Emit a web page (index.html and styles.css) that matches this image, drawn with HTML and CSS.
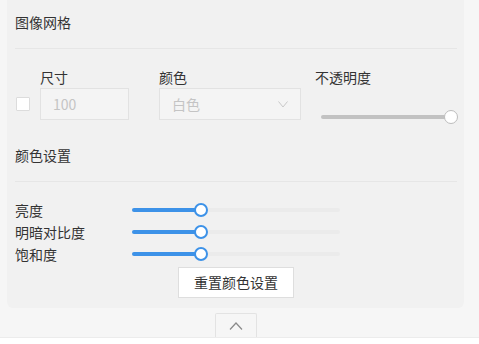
FILE: index.html
```html
<!DOCTYPE html>
<html lang="zh-CN">
<head>
<meta charset="utf-8">
<link rel="stylesheet" href="styles.css">
</head>
<body>
<div class="outer">
  <div class="panel">
    <div class="title">图像网格</div>
    <div class="divider"></div>
    <div class="grid-row">
      <div class="col col-check">
        <span class="checkbox"></span>
      </div>
      <div class="col col-size">
        <div class="label">尺寸</div>
        <div class="input">100</div>
      </div>
      <div class="col col-color">
        <div class="label">颜色</div>
        <div class="input select">
          <span>白色</span>
          <svg class="chev" width="10" height="7" viewBox="0 0 10 7"><polyline points="0.5,0.5 5,6 9.5,0.5" fill="none" stroke="#c8c8c8" stroke-width="1"/></svg>
        </div>
      </div>
      <div class="col col-opacity">
        <div class="label">不透明度</div>
        <div class="op-slider">
          <div class="op-track"></div>
          <div class="op-thumb"></div>
        </div>
      </div>
    </div>
    <div class="title title2">颜色设置</div>
    <div class="divider"></div>
    <div class="rows">
      <div class="srow">
        <div class="slabel">亮度</div>
        <div class="slider"><div class="fill" style="width:69px"></div><div class="thumb"></div></div>
      </div>
      <div class="srow">
        <div class="slabel">明暗对比度</div>
        <div class="slider"><div class="fill" style="width:69px"></div><div class="thumb"></div></div>
      </div>
      <div class="srow">
        <div class="slabel">饱和度</div>
        <div class="slider"><div class="fill" style="width:69px"></div><div class="thumb"></div></div>
      </div>
    </div>
    <div class="btn-wrap"><div class="btn">重置颜色设置</div></div>
  </div>
  <div class="collapse-wrap">
    <div class="collapse">
      <svg width="14" height="8" viewBox="0 0 14 8"><polyline points="1,7.5 7,1 13,7.5" fill="none" stroke="#8a8a8a" stroke-width="1.2"/></svg>
    </div>
  </div>
</div>
</body>
</html>
```

FILE: styles.css
```css
html, body {
  margin: 0;
  padding: 0;
  background: #ffffff;
}
body {
  font-family: "Noto Sans CJK SC", "Microsoft YaHei", sans-serif;
  font-size: 14px;
  color: #333333;
}
.outer {
  width: 479px;
  height: 338px;
  background: #f6f6f6;
  border-bottom: 1px solid #ececec;
  box-sizing: border-box;
  overflow: hidden;
}
.panel {
  margin-left: 7px;
  width: 457px;
  height: 308px;
  box-sizing: border-box;
  padding: 12px 7px 0 8px;
  background: #f1f1f1;
  border-radius: 0 0 6px 6px;
  display: flex;
  flex-direction: column;
}
.title {
  height: 20px;
  line-height: 20px;
  color: #333;
}
.title2 {
  margin-top: 21px;
}
.divider {
  margin-top: 16px;
  height: 1px;
  background: #e6e6e6;
}
.grid-row {
  display: flex;
  margin-top: 18px;
  align-items: flex-start;
}
.col {
  display: flex;
  flex-direction: column;
}
.label {
  height: 20px;
  line-height: 20px;
  margin-bottom: 1px;
}
.col-check {
  width: 25px;
  height: 53px;
  justify-content: flex-end;
}
.checkbox {
  display: block;
  margin-left: 1px;
  margin-bottom: 9px;
  width: 14px;
  height: 14px;
  box-sizing: border-box;
  background: #ffffff;
  border: 1px solid #dcdcdc;
  border-radius: 1px;
}
.col-size {
  width: 89px;
  margin-right: 30px;
}
.input {
  height: 32px;
  box-sizing: border-box;
  border: 1px solid #e2e2e2;
  background: #f4f4f4;
  color: #c4c4c4;
  line-height: 30px;
  padding-left: 12px;
  font-size: 14px;
}
.col-color {
  width: 142px;
  margin-right: 14px;
}
.select {
  display: flex;
  align-items: center;
  justify-content: space-between;
  padding-right: 12px;
}
.chev {
  display: block;
}
.col-opacity {
  width: 142px;
}
.op-slider {
  position: relative;
  margin-top: 22px;
  margin-left: 6px;
  width: 137px;
  height: 14px;
}
.op-track {
  position: absolute;
  left: 0;
  top: 5px;
  width: 130px;
  height: 4px;
  border-radius: 2px;
  background: #c2c2c2;
}
.op-thumb {
  position: absolute;
  left: 123px;
  top: 0;
  width: 14px;
  height: 14px;
  box-sizing: border-box;
  border-radius: 50%;
  background: #ffffff;
  border: 1.5px solid #bdbdbd;
}
.rows {
  margin-top: 17px;
  display: flex;
  flex-direction: column;
}
.srow {
  height: 22px;
  display: flex;
  align-items: center;
}
.slabel {
  width: 117px;
  line-height: 20px;
}
.slider {
  position: relative;
  width: 208px;
  height: 4px;
  border-radius: 2px;
  background: #ebebeb;
}
.fill {
  height: 4px;
  border-radius: 2px;
  background: #3d92e8;
}
.thumb {
  position: absolute;
  left: 62px;
  top: -5px;
  width: 14px;
  height: 14px;
  box-sizing: border-box;
  border-radius: 50%;
  background: #ffffff;
  border: 2px solid #3d92e8;
}
.btn-wrap {
  margin-top: 2px;
  display: flex;
  justify-content: center;
}
.btn {
  width: 116px;
  height: 31px;
  box-sizing: border-box;
  background: #ffffff;
  border: 1px solid #dedede;
  line-height: 29px;
  text-align: center;
  color: #333;
}
.collapse-wrap {
  margin-left: 7px;
  width: 457px;
  display: flex;
  justify-content: center;
  padding-top: 5px;
}
.collapse {
  width: 42px;
  height: 25px;
  box-sizing: border-box;
  border: 1px solid #e3e3e3;
  border-bottom: none;
  background: #f6f6f6;
  display: flex;
  align-items: center;
  justify-content: center;
  border-radius: 2px 2px 0 0;
}
.collapse svg {
  display: block;
}
```
